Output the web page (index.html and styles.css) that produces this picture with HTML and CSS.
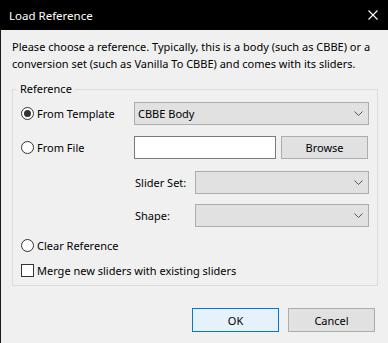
FILE: index.html
```html
<!DOCTYPE html>
<html lang="en">
<head>
    <meta charset="UTF-8">
    <title>Load Reference</title>
    <link rel="stylesheet" href="styles.css">
</head>
<body>
    <div class="window">
        <div class="titlebar">
            <span class="title">Load Reference</span>
            <svg class="close" width="10" height="10" viewBox="0 0 10 10">
                <path d="M0.5 0.5 L9.5 9.5 M9.5 0.5 L0.5 9.5" stroke="#fff" stroke-width="1.1" fill="none"/>
            </svg>
        </div>

        <div class="content">
            <p class="intro">Please choose a reference. Typically, this is a body (such as CBBE) or a<br>conversion set (such as Vanilla To CBBE) and comes with its sliders.</p>

            <fieldset class="group">
                <legend>Reference</legend>

                <!-- From template -->
                <div class="row row-template">
                    <label class="option"><span class="radio checked"></span>From Template</label>
                    <div class="combo combo-wide">
                        <span class="combo-text">CBBE Body</span>
                        <svg class="arrow" width="9" height="5" viewBox="0 0 9 5"><path d="M0.5 0.5 L4.5 4.5 L8.5 0.5" stroke="#555" fill="none"/></svg>
                    </div>
                </div>

                <!-- From file -->
                <div class="row row-file">
                    <label class="option"><span class="radio"></span>From File</label>
                    <div class="textbox"></div>
                    <button class="btn browse">Browse</button>
                </div>

                <div class="row row-slider">
                    <span class="spacer"></span>
                    <span class="field-label">Slider Set:</span>
                    <div class="combo combo-narrow">
                        <span class="combo-text"></span>
                        <svg class="arrow" width="9" height="5" viewBox="0 0 9 5"><path d="M0.5 0.5 L4.5 4.5 L8.5 0.5" stroke="#555" fill="none"/></svg>
                    </div>
                </div>

                <div class="row row-shape">
                    <span class="spacer"></span>
                    <span class="field-label">Shape:</span>
                    <div class="combo combo-narrow">
                        <span class="combo-text"></span>
                        <svg class="arrow" width="9" height="5" viewBox="0 0 9 5"><path d="M0.5 0.5 L4.5 4.5 L8.5 0.5" stroke="#555" fill="none"/></svg>
                    </div>
                </div>

                <div class="row-small row-clear">
                    <label class="option"><span class="radio"></span>Clear Reference</label>
                </div>

                <div class="row-small row-merge">
                    <label class="option"><span class="checkbox"></span>Merge new sliders with existing sliders</label>
                </div>
            </fieldset>

            <div class="actions">
                <button class="btn btn-default">OK</button>
                <button class="btn">Cancel</button>
            </div>
        </div>
    </div>
</body>
</html>
```

FILE: styles.css
```css
* {
    box-sizing: border-box;
}

body {
    margin: 0;
    font-family: 'Noto Sans', 'Segoe UI', sans-serif;
    font-size: 11px;
    color: #000;
    background: #f0f0f0;
}

.window {
    width: 388px;
    height: 343px;
    background: #f0f0f0;
    border-left: 1px solid #1b1b1b;
    display: flex;
    flex-direction: column;
}

.titlebar {
    height: 30px;
    background: #000;
    color: #fff;
    display: flex;
    align-items: center;
    justify-content: space-between;
    padding: 0 10px 0 9px;
    margin-left: -1px;
}

.title {
    font-size: 11.5px;
}

.content {
    padding: 0 10px 0 11px;
}

.intro {
    margin: 8px 0 0 0;
    line-height: 17px;
    white-space: nowrap;
}

.group {
    margin: 9px 0 0 0;
    padding: 0 8px 7px 8px;
    border: 1px solid #dcdcdc;
    border-radius: 0;
}

.group legend {
    padding: 0 3px;
    margin-left: -4px;
    line-height: 16px;
}

.row {
    display: flex;
    align-items: center;
    height: 23px;
}

.row-template { margin-top: 5px; }
.row-file { margin-top: 11px; }
.row-slider { margin-top: 12px; }
.row-shape { margin-top: 10px; }

.row-small {
    display: flex;
    align-items: center;
    height: 16px;
}

.row-clear { margin-top: 10px; }
.row-merge { margin-top: 9px; }

.option {
    display: flex;
    align-items: center;
    gap: 3px;
    width: 113px;
    white-space: nowrap;
}

.radio {
    width: 13px;
    height: 13px;
    border: 1px solid #333;
    border-radius: 50%;
    background: #fff;
    display: flex;
    align-items: center;
    justify-content: center;
    flex: none;
}

.radio.checked::after {
    content: '';
    width: 7px;
    height: 7px;
    border-radius: 50%;
    background: #333;
}

.checkbox {
    width: 13px;
    height: 13px;
    border: 1px solid #333;
    background: #fff;
    flex: none;
}

.combo {
    height: 23px;
    background: #e1e1e1;
    border: 1px solid #adadad;
    display: flex;
    align-items: center;
    justify-content: space-between;
    padding: 0 5px 0 3px;
}

.combo-wide {
    width: 235px;
}

.combo-narrow {
    width: 174px;
}

.spacer {
    width: 113px;
    flex: none;
}

.field-label {
    width: 61px;
    padding-left: 1px;
}

.textbox {
    width: 142px;
    height: 23px;
    background: #fff;
    border: 1px solid #7a7a7a;
}

.btn {
    font: inherit;
    color: #000;
    background: #e1e1e1;
    border: 1px solid #adadad;
    border-radius: 0;
    height: 24px;
    width: 87px;
    padding: 0;
}

.browse {
    width: 87px;
    height: 23px;
    margin-left: 5px;
}

.actions {
    display: flex;
    justify-content: flex-end;
    gap: 9px;
    margin-top: 22px;
    padding-right: 3px;
}

.btn-default {
    background: #e5f1fb;
    border-color: #0078d7;
}
```
